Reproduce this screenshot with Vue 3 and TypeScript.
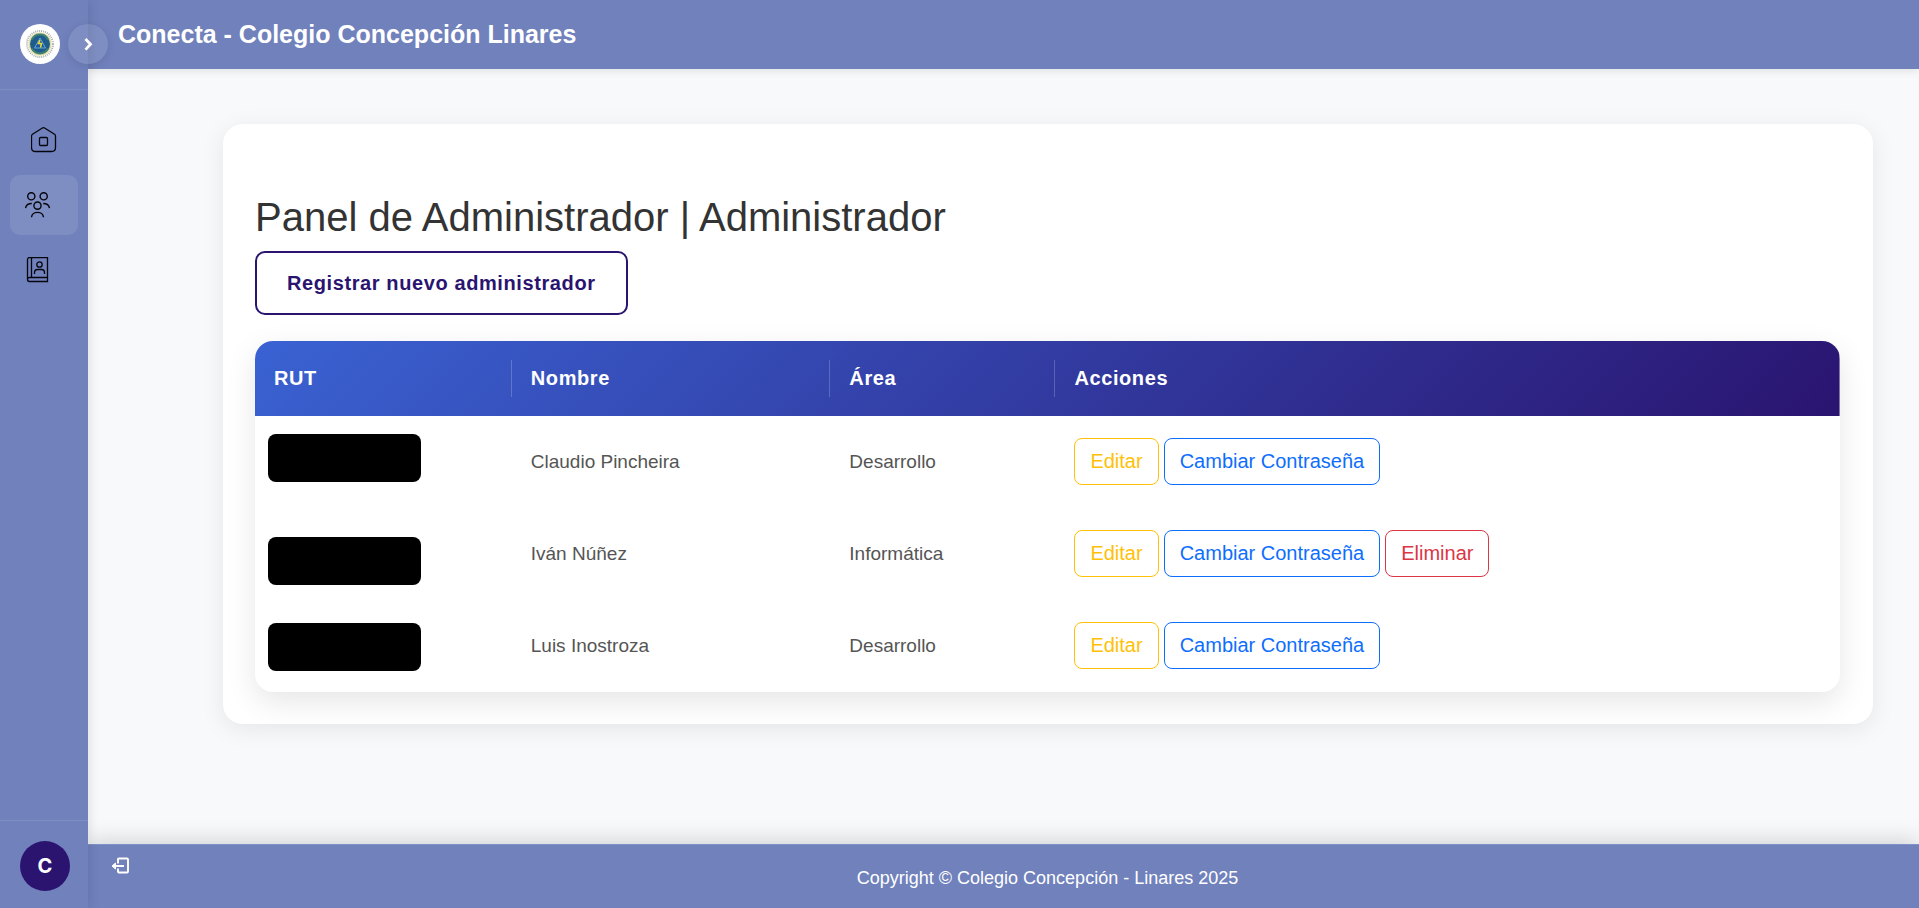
<script setup lang="ts">
interface Admin {
  name: string
  area: string
  removable: boolean
  maskTop: number
}

const admins: Admin[] = [
  { name: 'Claudio Pincheira', area: 'Desarrollo', removable: false, maskTop: 18 },
  { name: 'Iván Núñez', area: 'Informática', removable: true, maskTop: 29 },
  { name: 'Luis Inostroza', area: 'Desarrollo', removable: false, maskTop: 23 },
]
</script>

<template>
  <div class="page">
    <aside class="sidebar">
      <div class="brand">
        <svg class="logo" viewBox="0 0 40 40" role="img" aria-label="Colegio Concepción">
          <circle cx="20" cy="20" r="20" fill="#fff" />
          <circle cx="20" cy="20" r="13" fill="none" stroke="#a9afae" stroke-width="2" stroke-dasharray="1 1" />
          <circle cx="20" cy="20" r="11.500" fill="#dfdc9c" />
          <circle cx="20" cy="20" r="10" fill="#1d5c8c" />
          <path d="M12 15.500a9 9 0 0 1 16 0M12 24.500a9 9 0 0 0 16 0" fill="none" stroke="#3f7f74" stroke-width="2" />
          <path d="M20 14l5.500 10h-11z" fill="#1a5a9c" stroke="#6fa6cf" stroke-width="1" />
          <path d="M20 16l-1.500 3.500h3l-1 4" fill="none" stroke="#e8dc3a" stroke-width="1.500" />
        </svg>
        <button class="toggle" type="button" aria-label="Expandir menú">
          <svg viewBox="0 0 16 16" width="16" height="16" fill="none" stroke="#fff" stroke-width="2.800">
            <path d="M5.500 3l5 5.300-5 5.300" />
          </svg>
        </button>
      </div>
      <nav class="menu">
        <a class="item home" href="#" aria-label="Inicio">
          <svg viewBox="0 0 26 26" width="26" height="26" fill="none" stroke="#05060c" stroke-width="1.300">
            <path d="M.5 9 Q.5 8 1.500 7.300 L11 1.200 Q12.500 .2 14 1.200 L23.500 7.300 Q24.500 8 24.500 9 V20.500 Q24.500 24.500 20.500 24.500 H4.500 Q.5 24.500 .5 20.500Z" />
            <rect x="8.500" y="10.500" width="8" height="8" rx="1" />
          </svg>
        </a>
        <a class="item active" href="#" aria-label="Administradores">
          <svg viewBox="0 0 26 26" width="26" height="26" fill="none" stroke="#05060c" stroke-width="1.400">
            <circle cx="6.300" cy="4.300" r="3.600" />
            <circle cx="18.700" cy="4.300" r="3.600" />
            <circle cx="12.500" cy="13.600" r="3.600" />
            <path d="M.5 16.200C1 13.300 3.500 11.500 6.800 11.500M18.200 11.500c3.300 0 5.800 1.800 6.300 4.700M6.500 25.200c.5-6.500 11.500-6.500 12 0" />
          </svg>
        </a>
        <a class="item" href="#" aria-label="Directorio">
          <svg viewBox="0 0 26 26" width="26" height="26" fill="none" stroke="#05060c" stroke-width="1.300">
            <path d="M22.500 20.500H4.500a2 2 0 0 0 0 4h18V.500H4.500a2 2 0 0 0-2 2v20M6.500.500v20" />
            <circle cx="14.500" cy="7.500" r="2.700" />
            <path d="M9.500 17v-1.500q0-3 3-3h4q3 0 3 3v1.500" />
          </svg>
        </a>
      </nav>
      <div class="user">
        <div class="avatar">C</div>
        <button class="logout" type="button" aria-label="Cerrar sesión">
          <svg viewBox="0 0 20 18" width="20" height="18" fill="none" stroke="#fff" stroke-width="1.900">
            <path d="M8 6.500V2.500q0-1 1-1h8q1 0 1 1v12q0 1-1 1H9q-1 0-1-1v-3M4 9h10" />
            <path d="M2 9L5.500 6v6z" fill="#fff" stroke-width="1" />
          </svg>
        </button>
      </div>
    </aside>

    <div class="content">
      <header class="topbar">
        <div class="site">Conecta - Colegio Concepción Linares</div>
      </header>
      <main class="main">
        <section class="card">
          <h1>Panel de Administrador | Administrador</h1>
          <button class="register" type="button">Registrar nuevo administrador</button>
          <table>
            <colgroup>
              <col class="c-rut" />
              <col class="c-name" />
              <col class="c-area" />
              <col />
            </colgroup>
            <thead>
              <tr>
                <th>RUT</th>
                <th>Nombre</th>
                <th>Área</th>
                <th>Acciones</th>
              </tr>
            </thead>
            <tbody>
              <tr v-for="a in admins" :key="a.name">
                <td class="rut"><span class="mask" :style="{ top: a.maskTop + 'px' }"></span></td>
                <td>{{ a.name }}</td>
                <td>{{ a.area }}</td>
                <td>
                  <div class="actions">
                    <button class="btn edit" type="button">Editar</button>
                    <button class="btn pass" type="button">Cambiar Contraseña</button>
                    <button v-if="a.removable" class="btn del" type="button">Eliminar</button>
                  </div>
                </td>
              </tr>
            </tbody>
          </table>
        </section>
      </main>
      <footer class="footer">Copyright © Colegio Concepción - Linares 2025</footer>
    </div>
  </div>
</template>

<style>
body {
  margin: 0;
}
</style>

<style scoped>
* {
  box-sizing: border-box;
}
.page {
  display: flex;
  min-height: 100vh;
  background: #f8f9fb;
  font-family: "Liberation Sans", Arial, sans-serif;
  font-size: 20px;
  line-height: 30px;
  color: #333;
}
button {
  font: inherit;
  cursor: pointer;
}
.sidebar {
  position: relative;
  z-index: 2;
  flex: none;
  display: flex;
  flex-direction: column;
  width: 88px;
  background: #7081bc;
  box-shadow: 2px 0 10px rgba(0, 0, 0, 0.1);
}
.brand {
  position: relative;
  height: 90px;
  padding: 24px 20px;
  border-bottom: 1px solid rgba(255, 255, 255, 0.1);
}
.logo {
  display: block;
  width: 40px;
  height: 40px;
}
.toggle {
  position: absolute;
  top: 24px;
  right: -20px;
  display: flex;
  align-items: center;
  justify-content: center;
  width: 40px;
  height: 40px;
  padding: 0;
  border: 0;
  border-radius: 50%;
  background: rgba(255, 255, 255, 0.1);
  box-shadow: 0 2px 8px rgba(0, 0, 0, 0.1);
}
.menu {
  flex: 1;
  display: flex;
  flex-direction: column;
  gap: 5px;
  padding: 20px 10px;
}
.item {
  display: flex;
  align-items: center;
  height: 60px;
  padding-left: 15px;
  border-radius: 10px;
}
.item.home {
  justify-content: center;
  padding-left: 0;
}
.item.active {
  background: rgba(255, 255, 255, 0.1);
}
.user {
  position: relative;
  height: 88px;
  padding: 20px;
  border-top: 1px solid rgba(255, 255, 255, 0.1);
}
.avatar {
  display: flex;
  align-items: center;
  justify-content: center;
  width: 50px;
  height: 50px;
  border-radius: 50%;
  background: #2a1470;
  color: #fff;
  font-family: Inter, "Liberation Sans", sans-serif;
  font-weight: 700;
}
.logout {
  position: absolute;
  top: 36px;
  left: 110px;
  display: flex;
  padding: 0;
  border: 0;
  background: none;
}
.content {
  flex: 1;
  min-width: 0;
  display: flex;
  flex-direction: column;
}
.topbar {
  position: relative;
  z-index: 1;
  padding: 19px 30px 20px;
  background: #7081bc;
  box-shadow: 0 2px 8px rgba(0, 0, 0, 0.1);
  color: #fff;
}
.site {
  font-size: 25px;
  font-weight: 700;
}
.main {
  flex: 1;
  padding: 55px 46px 32px 135px;
}
.card {
  padding: 69px 33px 32px 32px;
  border-radius: 20px;
  background: #fff;
  box-shadow: 0 5px 25px rgba(0, 0, 0, 0.08);
}
h1 {
  margin: 0 0 10px;
  font-size: 40px;
  line-height: 48px;
  font-weight: 400;
}
.register {
  display: block;
  margin-bottom: 26px;
  padding: 15px 30px;
  border: 2px solid #2a1470;
  border-radius: 10px;
  background: #fff;
  color: #2a1470;
  font-weight: 700;
  letter-spacing: 0.03em;
}
table {
  width: 100%;
  table-layout: fixed;
  border-collapse: separate;
  border-spacing: 0;
  border-radius: 18px;
  overflow: hidden;
  background: #fff;
  box-shadow: 0 10px 30px rgba(0, 0, 0, 0.1);
}
.c-rut {
  width: 16.2%;
}
.c-name {
  width: 20.1%;
}
.c-area {
  width: 14.2%;
}
thead tr {
  background: linear-gradient(135deg, #3a62d2, #2a1470);
}
th {
  position: relative;
  height: 75px;
  padding: 0 19px 2px;
  color: #fff;
  font-weight: 700;
  letter-spacing: 0.03em;
  text-align: left;
}
th:not(:last-child)::after {
  content: "";
  position: absolute;
  top: 25%;
  right: 0;
  width: 1px;
  height: 50%;
  background: rgba(255, 255, 255, 0.2);
}
td {
  height: 92px;
  padding: 0 19px 1px;
  font-size: 19px;
  color: #555;
  vertical-align: middle;
}
.rut {
  position: relative;
}
.mask {
  position: absolute;
  left: 13px;
  width: 153px;
  height: 48px;
  border-radius: 8px;
  background: #000;
}
.actions {
  display: flex;
  gap: 5px;
}
.btn {
  padding: 7px 15px 8px;
  border: 1px solid currentColor;
  border-radius: 8px;
  background: transparent;
  font-size: 20px;
}
.edit {
  color: #ffc107;
}
.pass {
  color: #0d6efd;
}
.del {
  color: #dc3545;
}
.footer {
  position: relative;
  padding: 18px 0 15px 88px;
  border-top: 1px solid #8090c8;
  background: #7081bc;
  box-shadow: 0 -4px 20px rgba(0, 0, 0, 0.15);
  color: #fff;
  font-size: 18px;
  text-align: center;
}
</style>
